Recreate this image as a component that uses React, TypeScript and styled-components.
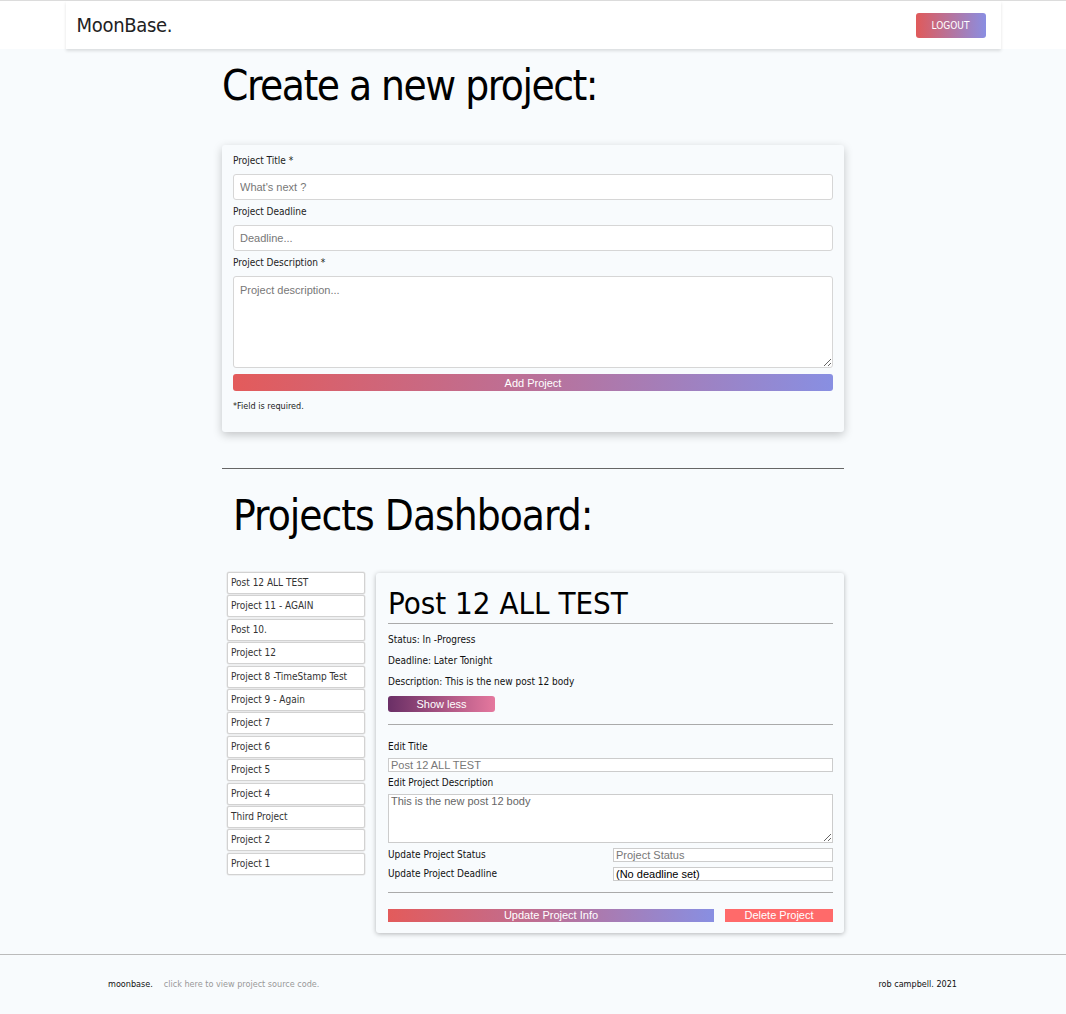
import React from 'react';
import styled, { createGlobalStyle } from 'styled-components';

const HEAD_FONT = `"Liberation Sans Narrow", "DejaVu Sans Condensed", Lato, "Noto Sans", sans-serif`;
const FORM_FONT = `"Liberation Sans", Arial, sans-serif`;
const GRADIENT = 'linear-gradient(90deg, #e35b5b 0%, #bf6e92 45%, #888fe2 100%)';

const GlobalStyle = createGlobalStyle`
  html, body {
    margin: 0;
    padding: 0;
    background: #f8fbfd;
    font-family: ${HEAD_FONT};
    color: #111;
  }
  * { box-sizing: border-box; }
`;

const Page = styled.div`
  min-height: 1014px;
  border-top: 1px solid #dcdcdc;
  display: flex;
  flex-direction: column;
`;

const NavBar = styled.header`
  background: #fff;
`;

const NavInner = styled.nav`
  width: 935px;
  margin: 0 auto;
  height: 48px;
  display: flex;
  align-items: center;
  justify-content: space-between;
  padding: 0 15px 0 11px;
  box-shadow: 0 2px 3px rgba(0, 0, 0, 0.12);
`;

const Brand = styled.span`
  font-size: 20px;
  color: #222;
  letter-spacing: -0.3px;
`;

const LogoutButton = styled.button`
  width: 70px;
  height: 25px;
  border: none;
  border-radius: 3px;
  background: linear-gradient(90deg, #e05a5a, #8a8ee2);
  color: #fff;
  font-family: ${HEAD_FONT};
  font-size: 10px;
  margin-top: 1px;
`;

const Main = styled.main`
  width: 622px;
  margin: 0 auto;
  flex: 1;
`;

const PageTitle = styled.h1<{ $indent?: number; $tracking?: number }>`
  margin: 0;
  font-weight: 400;
  font-size: 42px;
  line-height: 55px;
  letter-spacing: ${(p) => p.$tracking ?? -1}px;
  padding-left: ${(p) => p.$indent ?? 0}px;
  color: #000;
`;

const CreateTitle = styled(PageTitle)`
  margin-top: 9px;
  margin-bottom: 32px;
`;

const DashTitle = styled(PageTitle)`
  margin-top: 19px;
  margin-bottom: 29px;
`;

const Card = styled.section`
  background: #f8fbfd;
  border-radius: 3px;
  box-shadow: 0 3px 10px rgba(0, 0, 0, 0.22);
`;

const FormCard = styled(Card)`
  padding: 9px 11px 19px;
  display: flex;
  flex-direction: column;
`;

const Label = styled.label`
  font-size: 10px;
  line-height: 14px;
  color: #222;
  margin-bottom: 6px;
`;

const TextInput = styled.input`
  height: 26px;
  border: 1px solid #d6d6d6;
  border-radius: 3px;
  background: #fff;
  padding: 0 6px;
  font-family: ${FORM_FONT};
  font-size: 11px;
  margin-bottom: 5px;
  &::placeholder { color: #777; }
`;

const TextArea = styled.textarea`
  height: 92px;
  border: 1px solid #d6d6d6;
  border-radius: 3px;
  background: #fff;
  padding: 7px 6px;
  font-family: ${FORM_FONT};
  font-size: 11px;
  resize: vertical;
  display: block;
  &::placeholder { color: #777; }
`;

const GradientButton = styled.button<{ $height?: number; $radius?: number }>`
  height: ${(p) => p.$height ?? 17}px;
  border: none;
  border-radius: ${(p) => p.$radius ?? 3}px;
  background: ${GRADIENT};
  color: #fff;
  font-family: ${FORM_FONT};
  font-size: 11px;
  padding: 0;
`;

const AddButton = styled(GradientButton)`
  margin-top: 6px;
`;

const Note = styled.p`
  margin: 8px 0 0;
  font-size: 9px;
  line-height: 14px;
  color: #222;
`;

const Rule = styled.hr`
  border: none;
  border-top: 1px solid #666;
  margin: 36px 0 0;
`;

const Dashboard = styled.div`
  display: flex;
  align-items: flex-start;
  gap: 11px;
  padding-left: 5px;
`;

const ProjectList = styled.ul`
  list-style: none;
  margin: 0;
  padding: 0;
  width: 138px;
  display: flex;
  flex-direction: column;
  gap: 1.4px;
`;

const ProjectItem = styled.li`
  height: 22px;
  border: 1px solid #d2d2d2;
  border-radius: 2px;
  background: #fff;
  font-size: 10px;
  line-height: 20px;
  padding-left: 3px;
  color: #333;
  box-shadow: 0 0 0 0.5px #e4e4e4;
`;

const DetailCard = styled(Card)`
  flex: 1;
  margin-top: 1px;
  padding: 10px 11px 11px 12px;
  box-shadow: 0 1px 5px rgba(0, 0, 0, 0.28);
`;

const DetailTitle = styled.h2`
  margin: 0;
  font-weight: 400;
  font-size: 31px;
  line-height: 40px;
  color: #000;
`;

const Divider = styled.hr<{ $top: number; $bottom: number }>`
  border: none;
  border-top: 1px solid #aaa;
  margin: ${(p) => p.$top}px 0 ${(p) => p.$bottom}px;
`;

const InfoLine = styled.p`
  margin: 0 0 7px;
  font-size: 10px;
  line-height: 14px;
  color: #111;
`;

const ShowLess = styled(GradientButton)`
  width: 107px;
  height: 16px;
  margin-top: 2px;
  background: linear-gradient(90deg, #6a2f66, #e5789e);
  display: block;
`;

const SmallLabel = styled.div`
  font-size: 10px;
  line-height: 14px;
  color: #111;
`;

const EditInput = styled.input<{ $dark?: boolean }>`
  width: 100%;
  height: 14px;
  border: 1px solid #ccc;
  background: #fff;
  padding: 0 2px;
  font-family: ${FORM_FONT};
  font-size: 11px;
  color: ${(p) => (p.$dark ? '#000' : '#777')};
  display: block;
  &::placeholder { color: #777; }
`;

const EditTextArea = styled.textarea`
  width: 100%;
  height: 49px;
  border: 1px solid #ccc;
  background: #fff;
  padding: 0 2px;
  font-family: ${FORM_FONT};
  font-size: 11px;
  color: #666;
  display: block;
  resize: vertical;
`;

const EditGroup = styled.div<{ $gap: number; $top?: number }>`
  display: flex;
  flex-direction: column;
  gap: ${(p) => p.$gap}px;
  margin-top: ${(p) => p.$top ?? 0}px;
`;

const UpdateRow = styled.div`
  display: grid;
  grid-template-columns: 225px 1fr;
  align-items: center;
`;

const ButtonRow = styled.div`
  display: flex;
  gap: 11px;
`;

const UpdateButton = styled(GradientButton)`
  flex: 1;
  height: 13px;
  border-radius: 0;
  line-height: 13px;
`;

const DeleteButton = styled.button`
  width: 108px;
  height: 13px;
  border: none;
  background: #ff6a6a;
  color: #fff;
  font-family: ${FORM_FONT};
  font-size: 11px;
  line-height: 13px;
  padding: 0;
`;

const Footer = styled.footer`
  margin-top: 21px;
  border-top: 1px solid #bbb;
  height: 60px;
  display: flex;
  align-items: center;
  justify-content: space-between;
  padding: 0 109px 2px 108px;
  font-size: 9px;
`;

const FooterLeft = styled.div`
  display: flex;
  gap: 11px;
  color: #111;
`;

const FooterLink = styled.a`
  color: #999;
  text-decoration: none;
`;

const projects = [
  'Post 12 ALL TEST',
  'Project 11 - AGAIN',
  'Post 10.',
  'Project 12',
  'Project 8 -TimeStamp Test',
  'Project 9 - Again',
  'Project 7',
  'Project 6',
  'Project 5',
  'Project 4',
  'Third Project',
  'Project 2',
  'Project 1',
];

const App = () => {
  return (
    <Page>
      <GlobalStyle />
      <NavBar>
        <NavInner>
          <Brand>MoonBase.</Brand>
          <LogoutButton>LOGOUT</LogoutButton>
        </NavInner>
      </NavBar>

      <Main>
        <CreateTitle $tracking={-1.5}>Create a new project:</CreateTitle>
        <FormCard>
          <Label>Project Title *</Label>
          <TextInput placeholder="What's next ?" />
          <Label>Project Deadline</Label>
          <TextInput placeholder="Deadline..." />
          <Label>Project Description *</Label>
          <TextArea placeholder="Project description..." />
          <AddButton>Add Project</AddButton>
          <Note>*Field is required.</Note>
        </FormCard>

        <Rule />
        <DashTitle $indent={11} $tracking={-1}>Projects Dashboard:</DashTitle>

        <Dashboard>
          <ProjectList>
            {projects.map((name) => (
              <ProjectItem key={name}>{name}</ProjectItem>
            ))}
          </ProjectList>

          <DetailCard>
            <DetailTitle>Post 12 ALL TEST</DetailTitle>
            <Divider $top={0} $bottom={9} />
            <InfoLine>Status: In -Progress</InfoLine>
            <InfoLine>Deadline: Later Tonight</InfoLine>
            <InfoLine>Description: This is the new post 12 body</InfoLine>
            <ShowLess>Show less</ShowLess>
            <Divider $top={12} $bottom={15} />
            <EditGroup $gap={4}>
              <SmallLabel>Edit Title</SmallLabel>
              <EditInput defaultValue="Post 12 ALL TEST" />
              <SmallLabel>Edit Project Description</SmallLabel>
              <EditTextArea defaultValue="This is the new post 12 body" />
            </EditGroup>
            <EditGroup $gap={5} $top={5}>
              <UpdateRow>
                <SmallLabel>Update Project Status</SmallLabel>
                <EditInput placeholder="Project Status" />
              </UpdateRow>
              <UpdateRow>
                <SmallLabel>Update Project Deadline</SmallLabel>
                <EditInput $dark defaultValue="(No deadline set)" />
              </UpdateRow>
            </EditGroup>
            <Divider $top={11} $bottom={16} />
            <ButtonRow>
              <UpdateButton>Update Project Info</UpdateButton>
              <DeleteButton>Delete Project</DeleteButton>
            </ButtonRow>
          </DetailCard>
        </Dashboard>
      </Main>

      <Footer>
        <FooterLeft>
          <span>moonbase.</span>
          <FooterLink href="#">click here to view project source code.</FooterLink>
        </FooterLeft>
        <span>rob campbell. 2021</span>
      </Footer>
    </Page>
  );
};

export default App;
